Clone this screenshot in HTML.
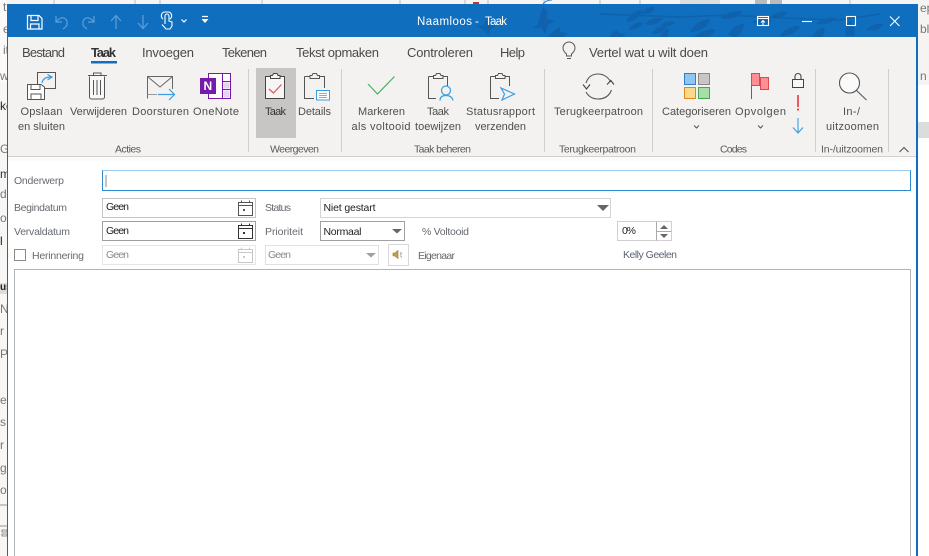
<!DOCTYPE html>
<html><head><meta charset="utf-8"><style>
html,body{margin:0;padding:0;background:#fff;width:929px;height:556px;overflow:hidden}
svg{display:block}
text{font-family:"Liberation Sans",sans-serif;font-size:11px;fill:#505050}
.tab{font-size:13px;fill:#4a4a4a}
.btn{font-size:11px;fill:#4f4f4f}
.grp{font-size:10.5px;fill:#5a5a5a}
.lab{font-size:10.5px;fill:#666a70}
.val{font-size:10.5px;fill:#222}
.dis{font-size:10.5px;fill:#8a8a8a}
.bg{font-size:12px;fill:#777}
</style></head><body>
<svg width="929" height="556" viewBox="0 0 929 556" xmlns="http://www.w3.org/2000/svg">
<rect width="929" height="556" fill="#f6f5f4"/>
<!-- background fragments -->
<rect x="0" y="0" width="7" height="83" fill="#fafafa"/>
<rect x="0" y="83" width="7" height="473" fill="#f7f6f5"/>
<rect x="0" y="283" width="7" height="11" fill="#dcdcdc"/>
<rect x="918" y="0" width="11" height="85" fill="#f5f4f3"/>
<rect x="918" y="85" width="11" height="471" fill="#fff"/>
<rect x="918" y="122" width="11" height="16" fill="#dcdcdc"/>
<text class="bg" x="3" y="11">t</text><text class="bg" x="3" y="33">e</text><text class="bg" x="3" y="54">it</text><text class="bg" x="0" y="80">w</text>
<text class="bg" x="0" y="110" style="fill:#222">ke</text><text class="bg" x="0" y="153">G</text><text class="bg" x="0" y="178" style="fill:#333">m</text><text class="bg" x="0" y="198">d</text><text class="bg" x="0" y="222">o</text><text class="bg" x="0" y="245" style="fill:#222">l</text>
<text class="bg" x="0" y="290" style="fill:#222;font-weight:bold;font-size:10px">us</text><text class="bg" x="0" y="313">N</text><text class="bg" x="0" y="335">r</text><text class="bg" x="0" y="358">P</text><text class="bg" x="0" y="404">e</text><text class="bg" x="0" y="426">s</text><text class="bg" x="0" y="449">r</text><text class="bg" x="0" y="472">g</text><text class="bg" x="0" y="494">o</text>
<path d="M0 505H7M0 526H7M2 530h5v2H2zM2 534h5v2H2z" stroke="#777" fill="none" stroke-width=".8"/>
<text class="bg" x="920" y="12">ep</text><text class="bg" x="920" y="33">bl</text><text class="bg" x="920" y="80">n</text>
<!-- top peeks -->
<path d="M54 0V4M135 0V4M160 0V4M262 0V4M400 0V4M465 0V4M488 0V4M544 0V4M600 0V4M640 0V4M690 0V4M850 0V4" stroke="#bbb"/>
<rect x="473" y="2" width="6" height="2" fill="#c0392b"/>
<rect x="680" y="0" width="40" height="4" fill="#ddd"/><rect x="755" y="0" width="12" height="4" fill="#bbb"/><rect x="770" y="0" width="12" height="4" fill="#bbb"/>
<path d="M543 4Q546 0 552 0" stroke="#2b88d8" fill="none"/>
<!-- window -->
<rect x="7" y="4" width="911" height="552" fill="#106ebe"/>
<rect x="8" y="37" width="908" height="519" fill="#fff"/>
<rect x="8" y="37" width="908" height="119" fill="#f3f2f1"/>
<rect x="8" y="156" width="908" height="1" fill="#d2d0ce"/>
<rect x="8" y="157" width="908" height="4" fill="#fbfbfb"/>
<!-- title art -->
<g fill="#0f62ab">
<path d="M533 28l5-4 2-9 3-8 4 4 0 8 8 2-7 4-3 9-3-6z"/>
<path d="M477 26l7-1 2-6 3 5 7 2-6 4-2 6-3-5z"/>
<path d="M548 37l6-6 5-4 2 5 7 1-5 4z"/>
<path d="M610 37l3-5 4-2 2 3 7 1-4 3z"/>
<path d="M626 22q6-12 16-12q-2 10-16 12zM640 14q8-8 15-7q-2 8-15 7zM645 24q8-8 18-6q-6 9-18 6zM628 30q5-8 15-8q-3 8-15 8zM652 34q4-8 14-8q-2 8-14 8zM660 25q8-5 15-3q-5 7-15 3z"/>
<path d="M690 32q6-12 20-13q-3 12-20 13zM694 37q8-8 22-8q-4 8-10 8zM720 18q12-8 22-7q-4 10-22 7zM728 35q4-10 16-11q0 8-8 13zM660 37q2-6 8-9q2 5-1 9z"/>
<path d="M752 22q10-6 20-2q-8 8-20 2zM770 18q8-8 18-6q-6 8-18 6zM780 36q6-10 20-10q-4 10-20 10zM816 24q8-8 20-6q-6 8-20 6zM812 37q4-8 12-10q2 6-2 10zM846 36q-2-10 4-16q6 8 4 16zM866 30q8-8 18-6q-5 8-18 6z"/>
<path d="M600 14l80 3 50-2 50 3 60 2 40-6" fill="none" stroke="#0f62ab" stroke-width="1.5"/>
</g>
<!-- QAT -->
<g fill="none" stroke="#fff" stroke-width="1.2">
<path d="M27.500 15.500H39L42 18.500V29H27.500z"/><path d="M31 15.500V20.500H38V15.500M30.500 29V24H39V29"/>
</g>
<g fill="none" stroke="#5f9fd8" stroke-width="1.2">
<path d="M56 16V22H62M56.500 21.500Q60 17 64 18Q68 20 67 25Q66 27 63 29"/>
<path d="M94 16V22H88M93.500 21.500Q90 17 86 18Q82 20 83 25Q84 27 87 29"/>
<path d="M116 29V16M111 21L116 15.500L121 21M143 15V28M138 23L143 28.500L148 23"/>
</g>
<path d="M165 24V16a2 2 0 0 1 4 0V21L172 22V26L170 29H166L162 24.500M163 19a4 4 0 0 1 1-7h5a4 4 0 0 1 1 7" fill="none" stroke="#fff" stroke-width="1.1"/>
<path d="M181.500 19.500L184 22L186.500 19.500M202 16.500H208" fill="none" stroke="#fff" stroke-width="1.2"/>
<path d="M201.500 19H208.500L205 23z" fill="#fff"/>
<text x="417" y="25" textLength="55" style="font-size:11.500px;fill:#fff">Naamloos</text>
<text x="475" y="25" style="font-size:11.500px;fill:#fff">-</text>
<text x="485" y="25" textLength="22" style="font-size:11.500px;fill:#fff">Taak</text>
<!-- window controls -->
<g fill="none" stroke="#fff" stroke-width="1.1">
<rect x="757.500" y="16.500" width="11" height="9"/><path d="M757.500 18.500H768.500"/><path d="M763 25V20.500M761 22.500L763 20.500L765 22.500"/>
<path d="M802 21.500H812"/><rect x="846.500" y="16.500" width="9" height="9"/>
<path d="M890 16.500L899.500 26M899.500 16.500L890 26"/>
</g>
<!-- tabs -->
<text class="tab" x="22" y="57" textLength="43">Bestand</text>
<text class="tab" x="91" y="57" textLength="25" style="font-weight:bold;fill:#333">Taak</text>
<rect x="91" y="61" width="26" height="2.500" fill="#106ebe"/>
<text class="tab" x="142" y="57" textLength="52">Invoegen</text>
<text class="tab" x="222" y="57" textLength="45">Tekenen</text>
<text class="tab" x="296" y="57" textLength="83">Tekst opmaken</text>
<text class="tab" x="407" y="57" textLength="66">Controleren</text>
<text class="tab" x="500" y="57" textLength="25">Help</text>
<path d="M566.500 56V54Q563 51 563 48A6 6 0 0 1 575 48Q575 51 571.500 54V56zM567 58.500H571" fill="none" stroke="#555" stroke-width="1"/>
<text class="tab" x="589" y="57" textLength="119">Vertel wat u wilt doen</text>
<!-- selected -->
<rect x="256" y="68" width="40" height="70" fill="#c8c6c4"/>
<!-- separators -->
<path d="M248.500 69V152M341.500 69V152M544.500 69V152M652.500 69V152M815.500 69V152M888.500 69V152" stroke="#d0cecc"/>
<!-- Opslaan -->
<rect x="37.500" y="72.500" width="18" height="16" fill="#f3f2f1" stroke="#555"/>
<path d="M42 83Q43 77 51 77M47.500 74.500L52 77L47.500 80" fill="none" stroke="#3a9ee4" stroke-width="1.2"/>
<path d="M27.500 84.500H41L44.500 87V99.500H27.500z" fill="#fff" stroke="#555"/>
<path d="M31 84.500V89.500H40V84.500M31 99.500V94H41V99.500" fill="none" stroke="#555"/>
<!-- Verwijderen -->
<path d="M89.500 76.500V97a2 2 0 0 0 2 2h11a2 2 0 0 0 2-2V76.500M88 75.500H107M93.500 75V73H101V75" fill="#f8f8f8" stroke="#555"/>
<path d="M93.500 80V95M97 80V95M100.500 80V95" stroke="#555"/>
<!-- Doorsturen -->
<path d="M147.500 98.500V76.500H172.500V89M147.500 76.500L160 87L172.500 76.500" fill="none" stroke="#666"/>
<path d="M147.500 94.500H157" stroke="#999"/>
<path d="M158 94.500H174M169 89L174.500 94.500L169 100" fill="none" stroke="#3a9ee4" stroke-width="1.2"/>
<!-- OneNote -->
<rect x="208.500" y="73.500" width="22" height="25" fill="#fff" stroke="#7719aa"/>
<path d="M222.500 73.500V98.500M222.500 81.500H230.500M222.500 89.500H230.500" stroke="#7719aa"/>
<rect x="223.500" y="82.500" width="6" height="6" fill="#e7d2f0"/><rect x="223.500" y="90.500" width="6" height="7" fill="#e7d2f0"/>
<rect x="200" y="78" width="16" height="16" fill="#7719aa"/>
<text x="203.500" y="90" style="font-size:12px;font-weight:bold;fill:#fff">N</text>
<!-- Taak icon -->
<path d="M265.500 76.500H284.500V98.500H265.500z" fill="#f6f6f6" stroke="#444"/>
<path d="M270.500 78.500V75.500H272.500L273.500 73.500H277L278 75.500H280V78.500z" fill="#f6f6f6" stroke="#444"/>
<path d="M269 89L273.500 93L281.500 84.500" fill="none" stroke="#e8535a" stroke-width="1.2"/>
<!-- Details icon -->
<path d="M304.500 76.500H324.500V88M304.500 76.500V98.500H314" fill="none" stroke="#555"/>
<path d="M310 78.500V75.500H312L313 73.500H316.500L317.500 75.500H319.500V78.500z" fill="#f3f2f1" stroke="#555"/>
<rect x="316.500" y="90.500" width="13" height="9.500" fill="#fff" stroke="#3a9ee4"/>
<path d="M319 93.500H327M319 95.500H327M319 97.500H327" stroke="#888" stroke-width=".8"/>
<!-- check -->
<path d="M368 84L377.500 94L394.500 76.500" fill="none" stroke="#4caf60" stroke-width="1.200"/>
<!-- Taak toewijzen -->
<path d="M428.500 76.500H447.500V86M428.500 76.500V98.500H436" fill="none" stroke="#555"/>
<path d="M433.500 78.500V75.500H435.500L436.500 73.500H440L441 75.500H443V78.500z" fill="#f3f2f1" stroke="#555"/>
<circle cx="446" cy="90.500" r="4.500" fill="#f3f2f1" stroke="#3a9ee4" stroke-width="1.200"/>
<path d="M440 100.500Q440 95.500 446 95.500Q452 95.500 453 100.500" fill="none" stroke="#3a9ee4" stroke-width="1.200"/>
<!-- Statusrapport -->
<path d="M490.500 76.500H509.500V86M490.500 76.500V98.500H499" fill="none" stroke="#555"/>
<path d="M495.500 78.500V75.500H497.500L498.500 73.500H502L503 75.500H505V78.500z" fill="#f3f2f1" stroke="#555"/>
<path d="M501 88L514.500 94L502 100L504.500 94z" fill="#f3f2f1" stroke="#3a9ee4" stroke-width="1.200"/>
<!-- Terugkeer -->
<path d="M586 83Q589 74 598 74Q606 74 611 82M611.500 90Q608 99 598 99Q590 99 586 92" fill="none" stroke="#555" stroke-width="1.100"/>
<path d="M583 84.500L586.500 89L590 84.500M607 84.500L610.800 80.500L614 84.500" fill="none" stroke="#444" stroke-width="1.100"/>
<!-- Categoriseren -->
<rect x="684.500" y="73.500" width="11" height="11" fill="#90c5f0" stroke="#2f80c8"/>
<rect x="698.500" y="73.500" width="11" height="11" fill="#c8c6c4" stroke="#8a8886"/>
<rect x="684.500" y="87.500" width="11" height="11" fill="#fad98a" stroke="#e08a1e"/>
<rect x="698.500" y="87.500" width="11" height="11" fill="#a8dfa8" stroke="#46a35a"/>
<!-- Flag -->
<path d="M751.500 73V99" stroke="#666"/>
<rect x="751.500" y="73.500" width="8" height="12" fill="#ff8f95" stroke="#e0484e"/>
<rect x="760.500" y="77.500" width="8" height="12" fill="#ff8f95" stroke="#e0484e"/>
<!-- lock etc -->
<rect x="792.500" y="79.500" width="11" height="8" fill="#f8f8f8" stroke="#444"/>
<path d="M795 79.500V76.500a3 3 0 0 1 6 0V79.500" fill="none" stroke="#444" stroke-width="1.100"/>
<path d="M798 95V107" stroke="#f0474e" stroke-width="1.800"/><rect x="797" y="108.500" width="2" height="2" fill="#f0474e"/>
<path d="M798 118V132.500M793 127.500L798 133L803 127.500" fill="none" stroke="#3a9ee4" stroke-width="1.100"/>
<!-- zoom -->
<circle cx="849.500" cy="83" r="10" fill="#fafafa" stroke="#555" stroke-width="1.100"/>
<path d="M856.500 90.500L866.500 100" stroke="#555" stroke-width="1.100"/>
<!-- button labels -->
<text class="btn" x="20.500" y="115" textLength="42">Opslaan</text>
<text class="btn" x="18" y="130" textLength="47">en sluiten</text>
<text class="btn" x="70" y="115" textLength="57">Verwijderen</text>
<text class="btn" x="132" y="115" textLength="57">Doorsturen</text>
<text class="btn" x="193" y="115" textLength="46">OneNote</text>
<text class="btn" x="265" y="115" textLength="21" style="fill:#333">Taak</text>
<text class="btn" x="298" y="115" textLength="33">Details</text>
<text class="btn" x="358" y="115" textLength="47">Markeren</text>
<text class="btn" x="351.500" y="130" textLength="59">als voltooid</text>
<text class="btn" x="427" y="115" textLength="22">Taak</text>
<text class="btn" x="415" y="130" textLength="46">toewijzen</text>
<text class="btn" x="466" y="115" textLength="69">Statusrapport</text>
<text class="btn" x="475" y="130" textLength="51">verzenden</text>
<text class="btn" x="554" y="115" textLength="89">Terugkeerpatroon</text>
<text class="btn" x="662" y="115" textLength="69">Categoriseren</text>
<text class="btn" x="735" y="115" textLength="51">Opvolgen</text>
<text class="btn" x="843" y="115" textLength="17">In-/</text>
<text class="btn" x="826" y="130" textLength="53">uitzoomen</text>
<path d="M694 125.500L696.500 128L699 125.500M758 125.500L760.500 128L763 125.500" fill="none" stroke="#555"/>
<!-- group labels -->
<text class="grp" x="115" y="152.500" textLength="26">Acties</text>
<text class="grp" x="270" y="152.500" textLength="49">Weergeven</text>
<text class="grp" x="414" y="152.500" textLength="57">Taak beheren</text>
<text class="grp" x="559" y="152.500" textLength="77">Terugkeerpatroon</text>
<text class="grp" x="720" y="152.500" textLength="27">Codes</text>
<text class="grp" x="821" y="152.500" textLength="62">In-/uitzoomen</text>
<path d="M899.500 152L904 147.500L908.500 152" fill="none" stroke="#555" stroke-width="1.100"/>
<!-- form -->
<text class="lab" x="14" y="184" textLength="50">Onderwerp</text>
<rect x="102.500" y="170.500" width="808" height="20" fill="#fff" stroke="#2b8ad0"/>
<path d="M102.500 170.500H910.500" stroke="#9cc9ec"/>
<path d="M106 175V187" stroke="#888"/>
<text class="lab" x="14" y="211" textLength="53">Begindatum</text>
<rect x="102.500" y="198.500" width="153" height="19" fill="#fff" stroke="#c4c4c4"/>
<text class="val" x="106" y="210" textLength="23">Geen</text>
<text class="lab" x="265" y="211" textLength="26">Status</text>
<rect x="320.500" y="198.500" width="290" height="19" fill="#fff" stroke="#d4d4d4"/>
<text class="val" x="323.500" y="211" textLength="52">Niet gestart</text>
<path d="M597 205H609L603 211z" fill="#666"/>
<text class="lab" x="14" y="235" textLength="56">Vervaldatum</text>
<rect x="102.500" y="221.500" width="153" height="19" fill="#fff" stroke="#a0a0a0"/>
<text class="val" x="106" y="234" textLength="23">Geen</text>
<text class="lab" x="265" y="235" textLength="38">Prioriteit</text>
<rect x="320.500" y="221.500" width="84" height="19" fill="#fff" stroke="#a0a0a0"/>
<text class="val" x="323.500" y="235" textLength="38">Normaal</text>
<path d="M392 229H402L397 233.500z" fill="#666"/>
<text class="lab" x="422" y="235" textLength="47">% Voltooid</text>
<rect x="617.500" y="221.500" width="54" height="19" fill="#fff" stroke="#d0d0d0"/>
<path d="M656.500 221.500V240.500M656.500 231.500H671.500" stroke="#aaa"/>
<text class="val" x="622" y="234" textLength="14">0%</text>
<path d="M660 229L664 225L668 229zM660 234H668L664 238z" fill="#666"/>
<rect x="14.500" y="249.500" width="11" height="11" fill="#fff" stroke="#8a8a8a"/>
<text class="lab" x="32" y="259" textLength="52">Herinnering</text>
<rect x="102.500" y="245.500" width="153" height="19" fill="#fff" stroke="#e6e6e6"/>
<text class="dis" x="106" y="258" textLength="23">Geen</text>
<rect x="265.500" y="245.500" width="113" height="19" fill="#fff" stroke="#e0e0e0"/>
<text class="dis" x="268" y="258" textLength="23">Geen</text>
<path d="M366 253H376L371 257.500z" fill="#a0a0a0"/>
<rect x="388.500" y="244.500" width="20" height="21" fill="#fff" stroke="#d8d8d8"/>
<path d="M393 253H395L398 250.500V258.500L395 256H393z" fill="#c9a23a" stroke="#8a7a40" stroke-width=".6"/>
<path d="M400 252.500L402 254.500M402 252.500L400 254.500M400 255.500L402 257.500" stroke="#888" stroke-width=".7"/>
<text class="lab" x="418" y="259" textLength="37">Eigenaar</text>
<text class="lab" x="623" y="258" textLength="54" style="fill:#5c6470">Kelly Geelen</text>
<!-- cal icons -->
<g fill="none" stroke="#555"><path d="M238.500 202.500H252.500V215.500H238.500zM238.500 205.500H252.500M241.500 200.500V202.500M249.500 200.500V202.500"/></g><rect x="243" y="209" width="2" height="2" fill="#555"/>
<g fill="none" stroke="#333"><path d="M238.500 225.500H252.500V238.500H238.500zM238.500 228.500H252.500M241.500 223.500V225.500M249.500 223.500V225.500"/></g><rect x="243" y="232" width="2" height="2" fill="#333"/>
<g fill="none" stroke="#c8c8c8"><path d="M238.500 249.500H252.500V262.500H238.500zM238.500 252.500H252.500M241.500 247.500V249.500M249.500 247.500V249.500"/></g><rect x="243" y="256" width="2" height="2" fill="#c8c8c8"/>
<!-- body -->
<rect x="14.500" y="269.500" width="896" height="290" fill="#fff" stroke="#b0b3b8"/>
</svg>
</body></html>
